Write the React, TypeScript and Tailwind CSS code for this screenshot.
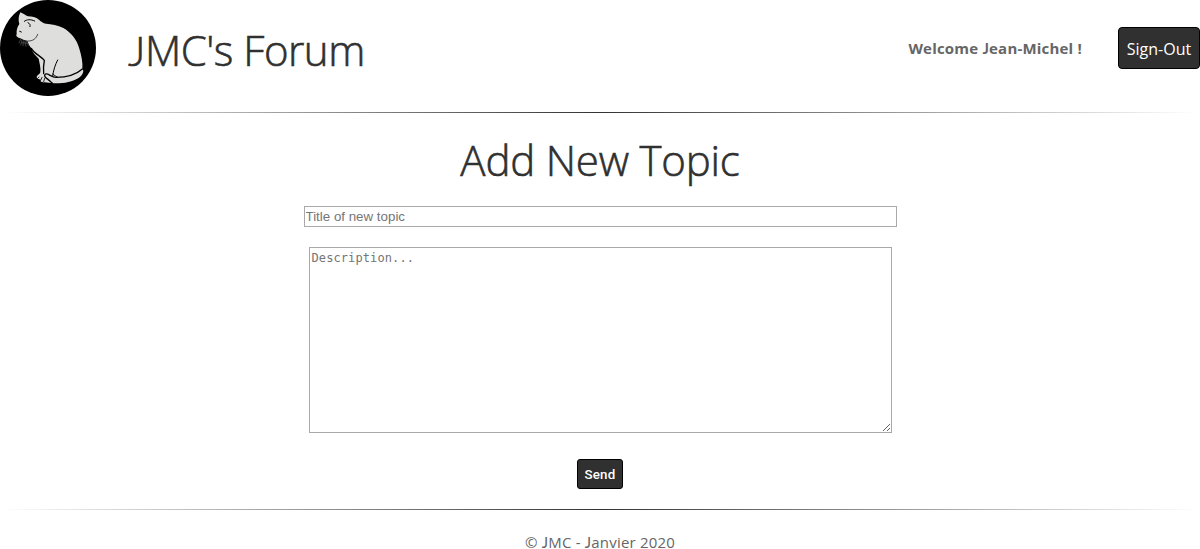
function CatLogo() {
  return (
    <svg viewBox="0 0 288 288" className="h-24 w-24 shrink-0" aria-label="Cat logo">
      <circle cx="144" cy="144" r="144" fill="#000" />
      <path
        d="M61 37 C69 41 77 46 84 49 C96 49 108 52 117 59 C124 65 129 69 138 71 C154 73 174 75 190 84 C214 98 231 119 238 146 C244 166 249 188 247 207 C254 213 247 227 237 233 C218 245 188 251 163 250 C151 249 141 248 134 247 C126 249 119 244 122 238 C116 239 107 234 111 228 C115 223 119 224 121 217 C123 205 119 191 116 176 C106 167 98 158 94 145 C88 138 85 130 82 122 C73 122 67 118 61 115 C51 113 47 107 50 103 C49 91 51 82 58 72 C54 60 56 47 61 37 Z"
        fill="#dededc"
      />
      <g fill="none" stroke="#000" strokeLinecap="round" strokeLinejoin="round">
        <path d="M73 64 C80 58 91 57 104 63 M84 68 C89 70 92 75 90 80" strokeWidth="3" />
        <path d="M59 94 L64 96" strokeWidth="3" />
        <path d="M113 103 C109 116 98 124 84 123" strokeWidth="2" />
        <path d="M94 145 C104 162 123 169 133 181 C130 196 130 207 131 221" strokeWidth="4" />
        <path d="M173 180 C165 195 160 212 158 229" strokeWidth="3" />
        <path d="M247 207 C228 224 198 232 168 232 C154 232 146 220 137 222 C132 224 133 230 140 235 C149 241 151 246 157 249" strokeWidth="4" />
        <path d="M158 222 C163 226 167 229 172 231 M126 232 L122 241 M134 235 L131 245 M117 231 L113 235" strokeWidth="2.5" />
      </g>
      <path
        d="M62 117 L57 130 M66 119 L62 136 M70 121 L69 139 M74 122 L78 140 M78 122 L86 137 M64 128 L82 130"
        fill="none"
        stroke="#777"
        strokeWidth="1.5"
      />
    </svg>
  );
}

function Divider() {
  return <hr className="h-px w-full shrink-0 border-0 bg-[linear-gradient(to_right,transparent,#333,transparent)]" />;
}

// Lato's capital J rests on the baseline instead of hanging below it.
function CapitalJ() {
  return <span className="font-['Lato',sans-serif] leading-none">J</span>;
}

export default function App() {
  return (
    <div className="flex h-[549px] flex-col overflow-hidden bg-white font-['Open_Sans',sans-serif] text-[#666]">
      <header className="flex h-24 shrink-0 items-center">
        <CatLogo />
        <h1 className="ml-8 pt-1 text-[42px] leading-[56px] font-light tracking-[-0.5px] whitespace-nowrap text-[#303030] [-webkit-text-stroke:0.6px_#303030]">
          <CapitalJ />MC's Forum
        </h1>
        <div className="ml-auto flex items-center gap-9">
          <span className="text-[15px] leading-6 font-bold tracking-[0.2px] whitespace-nowrap">
            Welcome <CapitalJ />ean-Michel !
          </span>
          <button className="h-[42px] w-[82px] rounded border border-black bg-[#303030] pt-px text-base whitespace-nowrap text-white">
            Sign-Out
          </button>
        </div>
      </header>
      <div className="mt-4">
        <Divider />
      </div>
      <main className="flex flex-col items-center">
        <h2 className="mt-[19px] text-[42px] leading-[56px] font-light tracking-[-0.2px] whitespace-nowrap text-[#303030] [-webkit-text-stroke:0.6px_#303030]">
          Add New Topic
        </h2>
        <input
          type="text"
          placeholder="Title of new topic"
          className="mt-[18px] h-[21px] w-[593px] border border-[#a9a9a9] px-px font-['Liberation_Sans',sans-serif] text-[13.333px] leading-[15px] placeholder:text-[#757575]"
        />
        <textarea
          placeholder="Description..."
          className="mt-5 block h-[186px] w-[583px] resize border border-[#a9a9a9] px-0.5 py-0.5 font-['DejaVu_Sans_Mono',monospace] text-[12px] leading-4 tracking-[0.1px] placeholder:text-[#757575]"
        />
        <button className="mt-[26px] h-[30px] w-[46px] rounded-[3px] border border-black bg-[#303030] pt-px font-['Roboto',sans-serif] text-[13.333px] font-medium tracking-[0.2px] text-white">
          Send
        </button>
      </main>
      <div className="mt-5">
        <Divider />
      </div>
      <footer className="mt-[25px] text-center text-[15px] leading-[14px] tracking-[0.2px]">
        © <CapitalJ />MC - <CapitalJ />anvier 2020
      </footer>
    </div>
  );
}
